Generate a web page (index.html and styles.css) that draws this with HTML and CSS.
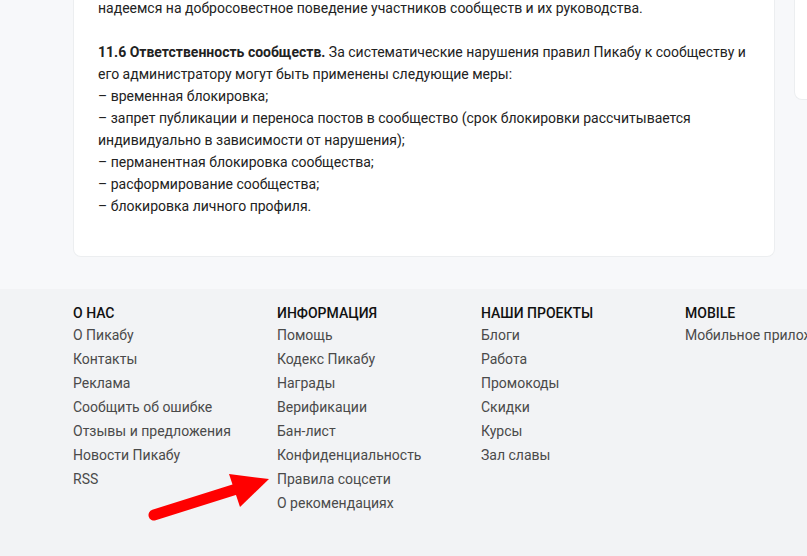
FILE: index.html
```html
<!DOCTYPE html>
<html lang="ru">
<head>
<meta charset="utf-8">
<link rel="stylesheet" href="styles.css">
</head>
<body>
<div class="page">
  <main class="layout">
    <article class="card">
      <p>надеемся на добросовестное поведение участников сообществ и их руководства.</p>
      <p><b>11.6 Ответственность сообществ.</b> За систематические нарушения правил Пикабу к сообществу и его администратору могут быть применены следующие меры:<br>– временная блокировка;<br>– запрет публикации и переноса постов в сообщество (срок блокировки рассчитывается индивидуально в зависимости от нарушения);<br>– перманентная блокировка сообщества;<br>– расформирование сообщества;<br>– блокировка личного профиля.</p>
    </article>
    <aside class="side"><div class="side-card"></div></aside>
  </main>
  <footer class="footer">
    <div class="col">
      <h4>О нас</h4>
      <a>О Пикабу</a><a>Контакты</a><a>Реклама</a><a>Сообщить об ошибке</a><a>Отзывы и предложения</a><a>Новости Пикабу</a><a>RSS</a>
    </div>
    <div class="col">
      <h4>Информация</h4>
      <a>Помощь</a><a>Кодекс Пикабу</a><a>Награды</a><a>Верификации</a><a>Бан-лист</a><a>Конфиденциальность</a><a>Правила соцсети</a><a>О рекомендациях</a>
    </div>
    <div class="col">
      <h4>Наши проекты</h4>
      <a>Блоги</a><a>Работа</a><a>Промокоды</a><a>Скидки</a><a>Курсы</a><a>Зал славы</a>
    </div>
    <div class="col col-last">
      <h4>Mobile</h4>
      <a>Мобильное приложение</a>
    </div>
  </footer>
</div>
<svg class="arrow" width="807" height="556" viewBox="0 0 807 556">
  <line x1="154" y1="515" x2="246" y2="486" stroke="#ff0000" stroke-width="11" stroke-linecap="round"/>
  <polygon points="229,474 269,479 240,507" fill="#ff0000"/>
</svg>
</body>
</html>
```
FILE: styles.css
```css
html, body {
  margin: 0;
  padding: 0;
}
body {
  background: #f7f8fa;
  font-family: Roboto, "Noto Sans", Arial, sans-serif;
  font-size: 14px;
  line-height: 22px;
  color: #222;
  overflow: hidden;
  width: 807px;
  height: 556px;
  position: relative;
}
.page {
  display: flex;
  flex-direction: column;
}
.layout {
  display: flex;
  align-items: flex-start;
  gap: 19px;
  padding-left: 73px;
  margin-top: -4px;
}
.card {
  flex: 0 0 702px;
  box-sizing: border-box;
  background: #fff;
  border: 1px solid #eceef0;
  border-top: none;
  border-radius: 0 0 8px 8px;
  padding: 1px 24px 39px 24px;
}
.card p {
  margin: 0 0 22px 0;
}
.card p:last-child {
  margin-bottom: 0;
}
.card b {
  font-weight: 700;
}
.side {
  flex: 1;
}
.side-card {
  height: 103px;
  background: #fff;
  border: 1px solid #eceef0;
  border-top: none;
  border-right: none;
  border-radius: 0 0 0 8px;
}
.footer {
  margin-top: 32px;
  background: #f2f3f5;
  display: flex;
  padding: 15px 0 0 73px;
  height: 280px;
  box-sizing: border-box;
}
.col {
  flex: 0 0 204px;
  display: flex;
  flex-direction: column;
  white-space: nowrap;
}
.col-last {
  overflow: hidden;
  flex-basis: 122px;
}
.col h4 {
  margin: 0;
  font-size: 14px;
  line-height: 19px;
  font-weight: 500;
  text-transform: uppercase;
  color: #111;
}
.col a {
  line-height: 24px;
  color: #4a4a4a;
}
.arrow {
  position: absolute;
  left: 0;
  top: 0;
  pointer-events: none;
}
```
